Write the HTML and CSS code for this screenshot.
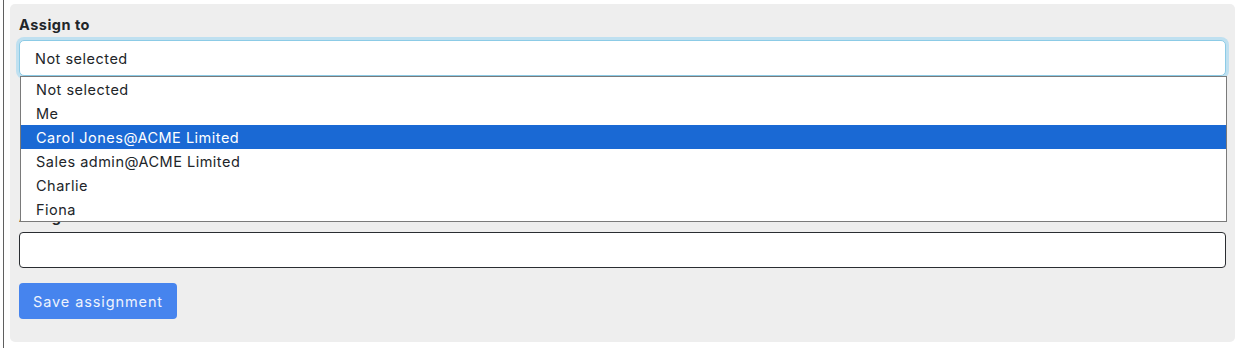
FILE: index.html
```html
<!DOCTYPE html>
<html lang="en">
<head>
<meta charset="utf-8">
<title>Assign</title>
<link rel="stylesheet" href="styles.css">
</head>
<body>
<div class="frame">
  <form class="panel">
    <div class="group group-assign">
      <label class="form-label">Assign to</label>
      <div class="select">Not selected</div>
      <ul class="options">
        <li>Not selected</li>
        <li>Me</li>
        <li class="active">Carol Jones@ACME Limited</li>
        <li>Sales admin@ACME Limited</li>
        <li>Charlie</li>
        <li>Fiona</li>
      </ul>
    </div>
    <div class="group">
      <label class="form-label">Assignment note</label>
      <div class="input"></div>
    </div>
    <button type="button" class="btn">Save assignment</button>
  </form>
</div>
</body>
</html>
```

FILE: styles.css
```css
html, body {
  margin: 0;
  padding: 0;
  background: #ffffff;
}
body {
  font-family: "Inter", "Open Sans", sans-serif;
  font-size: 14.5px;
  letter-spacing: 0.5px;
  color: #212529;
  height: 348px;
  overflow: hidden;
}
.frame {
  margin-left: 3px;
  border-left: 1px solid #5f5f5f;
  height: 348px;
  padding: 4px 4px 0 6px;
  box-sizing: border-box;
}
.panel {
  background: #eeeeee;
  border-radius: 5px;
  padding: 12px 9px 23px 9px;
  margin: 0;
}
.group {
  position: relative;
}
.group-assign {
  margin-bottom: 132px;
}
.form-label {
  display: block;
  font-weight: 700;
  font-size: 14.5px;
  letter-spacing: 0.5px;
  line-height: 17px;
  margin-bottom: 7px;
  color: #212529;
}
.select {
  height: 36px;
  box-sizing: border-box;
  background: #fff;
  border: 1px solid #8ccbe6;
  border-radius: 5px;
  box-shadow: 0 0 0 3px #bfe0f0;
  padding: 0 15px;
  line-height: 35px;
}
.options {
  position: absolute;
  top: 100%;
  left: 1px;
  right: -1px;
  margin: 0;
  padding: 0;
  list-style: none;
  background: #fff;
  border: 1px solid #7a7a7a;
  z-index: 2;
}
.options li {
  height: 24px;
  line-height: 25px;
  padding-left: 15px;
}
.options li.active {
  background: #1a69d4;
  color: #fff;
}
.input {
  height: 36px;
  box-sizing: border-box;
  background: #fff;
  border: 1px solid #2a2d31;
  border-radius: 4px;
  margin-bottom: 15px;
}
.btn {
  display: block;
  height: 36px;
  padding: 0 14px;
  border: 0;
  border-radius: 4px;
  background: #4684ee;
  color: #eef3fd;
  font-family: inherit;
  font-size: 14.5px;
  letter-spacing: 0.9px;
}
```
